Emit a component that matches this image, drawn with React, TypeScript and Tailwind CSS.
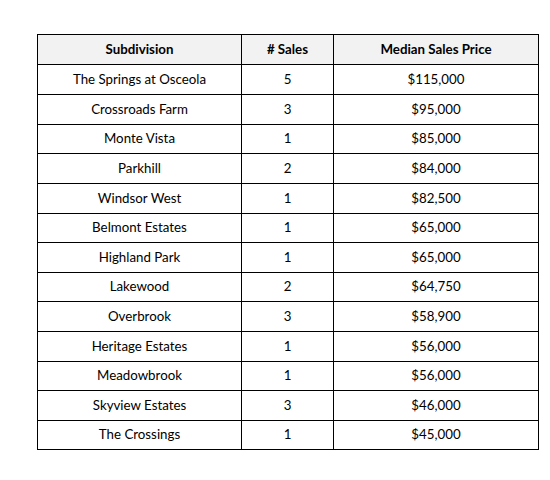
const rows: [string, number, string, string][] = [
  ["The Springs at Osceola", 5, "$115,000", "h-[30px]"],
  ["Crossroads Farm", 3, "$95,000", "h-[30px]"],
  ["Monte Vista", 1, "$85,000", "h-[29px]"],
  ["Parkhill", 2, "$84,000", "h-[30px]"],
  ["Windsor West", 1, "$82,500", "h-[30px]"],
  ["Belmont Estates", 1, "$65,000", "h-[29px]"],
  ["Highland Park", 1, "$65,000", "h-[30px]"],
  ["Lakewood", 2, "$64,750", "h-[29px]"],
  ["Overbrook", 3, "$58,900", "h-[30px]"],
  ["Heritage Estates", 1, "$56,000", "h-[30px]"],
  ["Meadowbrook", 1, "$56,000", "h-[29px]"],
  ["Skyview Estates", 3, "$46,000", "h-[30px]"],
  ["The Crossings", 1, "$45,000", "h-[29px]"],
];

export default function App() {
  return (
    <div className="w-[550px] h-[480px] bg-white pt-[34px] pl-[37px] font-['Lato',sans-serif] text-[13.3px] text-black">
      <table className="border-collapse table-fixed w-[501px]">
        <colgroup>
          <col className="w-[204px]" />
          <col className="w-[92px]" />
          <col className="w-[205px]" />
        </colgroup>
        <thead>
          <tr className="h-[30px] bg-[#f2f2f2] font-bold">
            <th className="border border-black p-0 text-center">Subdivision</th>
            <th className="border border-black p-0 text-center"># Sales</th>
            <th className="border border-black p-0 text-center">Median Sales Price</th>
          </tr>
        </thead>
        <tbody>
          {rows.map(([name, sales, price, h]) => (
            <tr key={name} className={h}>
              <td className="border border-black p-0 text-center">{name}</td>
              <td className="border border-black p-0 text-center">{sales}</td>
              <td className="border border-black p-0 text-center">{price}</td>
            </tr>
          ))}
        </tbody>
      </table>
    </div>
  );
}
